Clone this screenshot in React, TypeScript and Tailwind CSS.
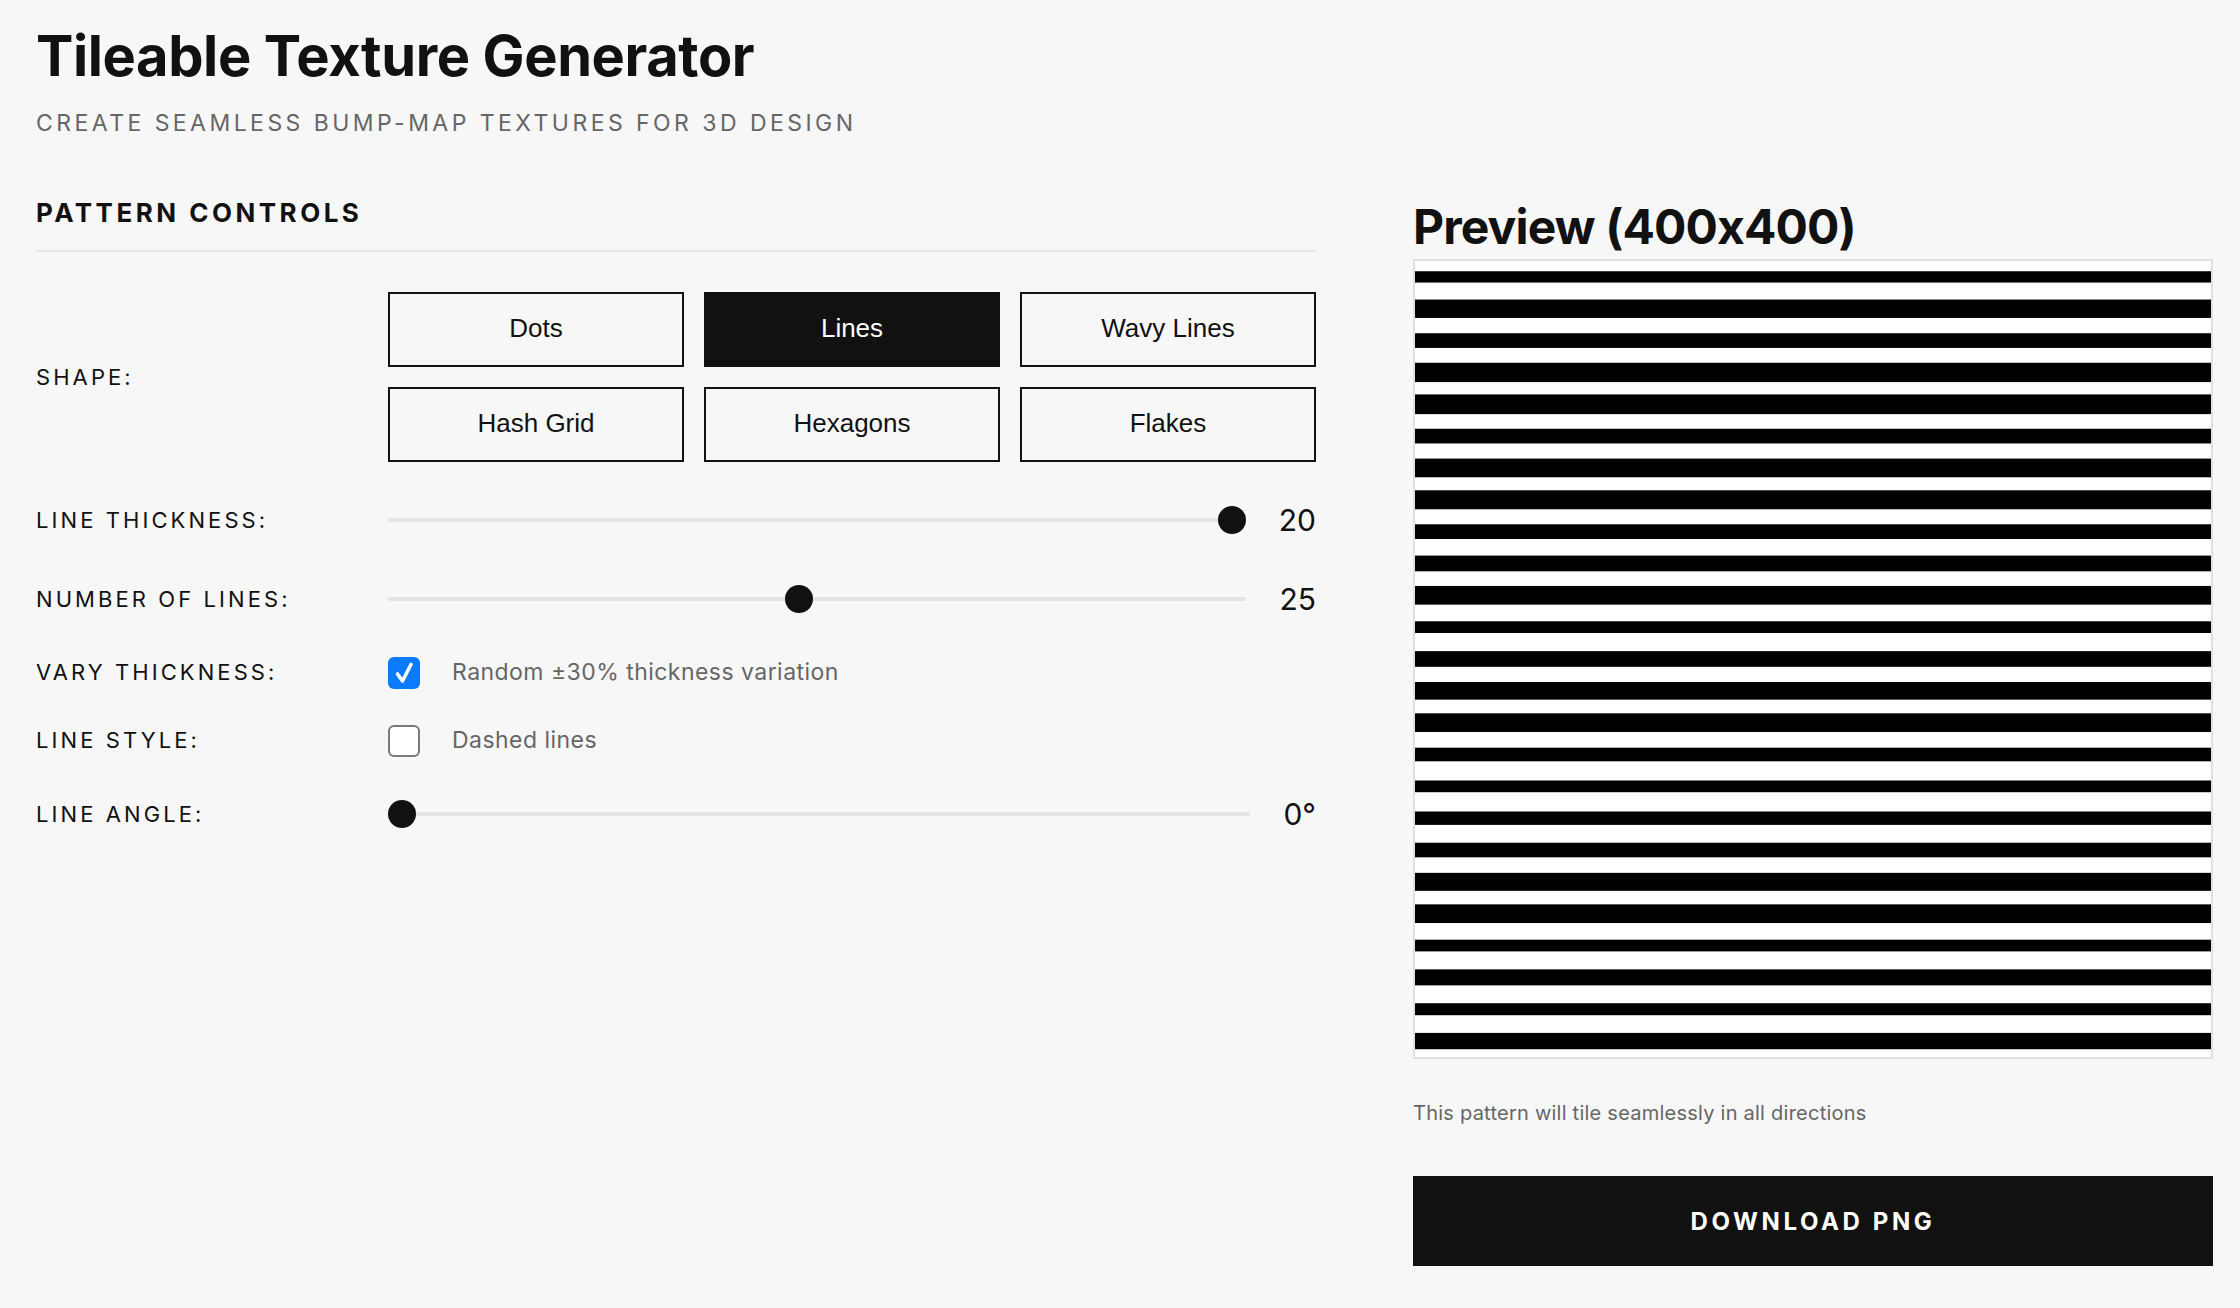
import { useState } from "react"

const SHAPES = ["Dots", "Lines", "Wavy Lines", "Hash Grid", "Hexagons", "Flakes"]

// measured stripe thickness (display px) for the 25 lines
const STRIPES = [
	11.3, 18.4, 14.7, 19.3, 19.7, 14.7, 18.7, 19, 14.7, 15.7, 18.7, 11.7, 15.7,
	17.6, 18.7, 13.6, 11.7, 13.4, 14.6, 18, 18.7, 11.7, 16, 12, 16.3,
]

function Label({ children }: { children: React.ReactNode }) {
	return (
		<div className="w-[352px] shrink-0 text-[22px] leading-[29px] tracking-[0.14em] text-[#111]">
			{children}
		</div>
	)
}

function Slider({ pos, value }: { pos: number; value: string }) {
	return (
		<div className="flex flex-1 items-center">
			<div className="relative h-[4px] flex-1 rounded-full bg-[#e4e4e4]">
				<div
					className="absolute top-1/2 h-[28px] w-[28px] -translate-y-1/2 rounded-full bg-[#111]"
					style={{ left: `calc(${pos} * (100% - 28px))` }}
				/>
			</div>
			<div className="ml-[33px] text-[30px] leading-none text-[#111]">{value}</div>
		</div>
	)
}

function Check({ checked, text }: { checked: boolean; text: string }) {
	return (
		<div className="flex items-center">
			{checked ? (
				<div className="flex h-[32px] w-[32px] shrink-0 items-center justify-center rounded-[6px] bg-[#0a7aff]">
					<svg width="22" height="24" viewBox="0 0 22 24" fill="none">
						<path d="M4.5 13l5 7L18 3.5" stroke="white" strokeWidth="3.6" strokeLinecap="round" strokeLinejoin="round" />
					</svg>
				</div>
			) : (
				<div className="h-[32px] w-[32px] shrink-0 rounded-[6px] border-2 border-[#7a7a7a] bg-white" />
			)}
			<span className="ml-[32px] text-[23px] leading-[29px] tracking-[0.02em] text-[#666]">{text}</span>
		</div>
	)
}

export default function App() {
	const [shape, setShape] = useState("Lines")

	return (
		<div
			className="min-h-screen bg-[#f7f7f7] pl-[36px] pt-[28px] text-[#111] [font-feature-settings:'calt'_0]"
			style={{ fontFamily: "Inter, 'Noto Sans', sans-serif" }}
		>
			<h1 className="text-[56px] font-bold leading-[56px] tracking-[-0.007em]">Tileable Texture Generator</h1>
			<p className="mt-[27px] text-[23px] leading-[24px] tracking-[0.15em] text-[#666]">
				CREATE SEAMLESS BUMP-MAP TEXTURES FOR 3D DESIGN
			</p>

			<div className="mt-[65px] flex items-start gap-[97px]">
				<div className="w-[1280px]">
					<h2 className="border-b-2 border-[#e6e6e6] pb-[24px] text-[26px] font-bold leading-[26px] tracking-[0.134em]">
						PATTERN CONTROLS
					</h2>

					<div className="mt-[40px] flex flex-col gap-[39px]">
						<div className="flex items-center">
							<Label>SHAPE:</Label>
							<div className="grid flex-1 grid-cols-3 gap-[20px]">
								{SHAPES.map((s) => (
									<button
										key={s}
										onClick={() => setShape(s)}
										className={
											s === shape
												? "h-[75px] border-2 border-[#111] bg-[#111] pb-[2px] text-[26px] text-white"
												: "h-[75px] border-2 border-[#111] bg-transparent pb-[2px] text-[26px] text-[#111]"
										}
										style={{ fontFamily: "'Liberation Sans', Arial, sans-serif" }}
									>
										{s}
									</button>
								))}
							</div>
						</div>

						<div className="-mt-[1px] flex h-[40px] items-center">
							<Label>LINE THICKNESS:</Label>
							<Slider pos={1} value="20" />
						</div>

						<div className="flex h-[40px] items-center">
							<Label>NUMBER OF LINES:</Label>
							<Slider pos={0.478} value="25" />
						</div>

						<div className="flex h-[29px] items-center">
							<Label>VARY THICKNESS:</Label>
							<Check checked text="Random ±30% thickness variation" />
						</div>

						<div className="flex h-[29px] items-center">
							<Label>LINE STYLE:</Label>
							<Check checked={false} text="Dashed lines" />
						</div>

						<div className="flex h-[40px] items-center">
							<Label>LINE ANGLE:</Label>
							<Slider pos={0} value="0°" />
						</div>
					</div>
				</div>

				<div className="mt-[3px] w-[800px]">
					<h2 className="text-[48px] font-bold leading-[48px] tracking-[-0.018em]">Preview (400x400)</h2>
					<div className="mt-[8px] h-[800px] w-[800px] border-2 border-[#e0e0e0] bg-white">
						<svg viewBox="0 0 796 796" className="block h-full w-full" preserveAspectRatio="none">
							{STRIPES.map((t, i) => {
								const c = 15.9 + 31.84 * i
								return <rect key={i} x="0" y={c - t / 2} width="796" height={t} fill="#000" />
							})}
						</svg>
					</div>
					<p className="mt-[44px] text-[20px] leading-[20px] tracking-[0.012em] text-[#666]">
						This pattern will tile seamlessly in all directions
					</p>
					<button className="mt-[53px] h-[90px] w-full bg-[#111] pt-[2px] text-[24px] font-bold tracking-[0.15em] text-white">
						DOWNLOAD PNG
					</button>
				</div>
			</div>
		</div>
	)
}
